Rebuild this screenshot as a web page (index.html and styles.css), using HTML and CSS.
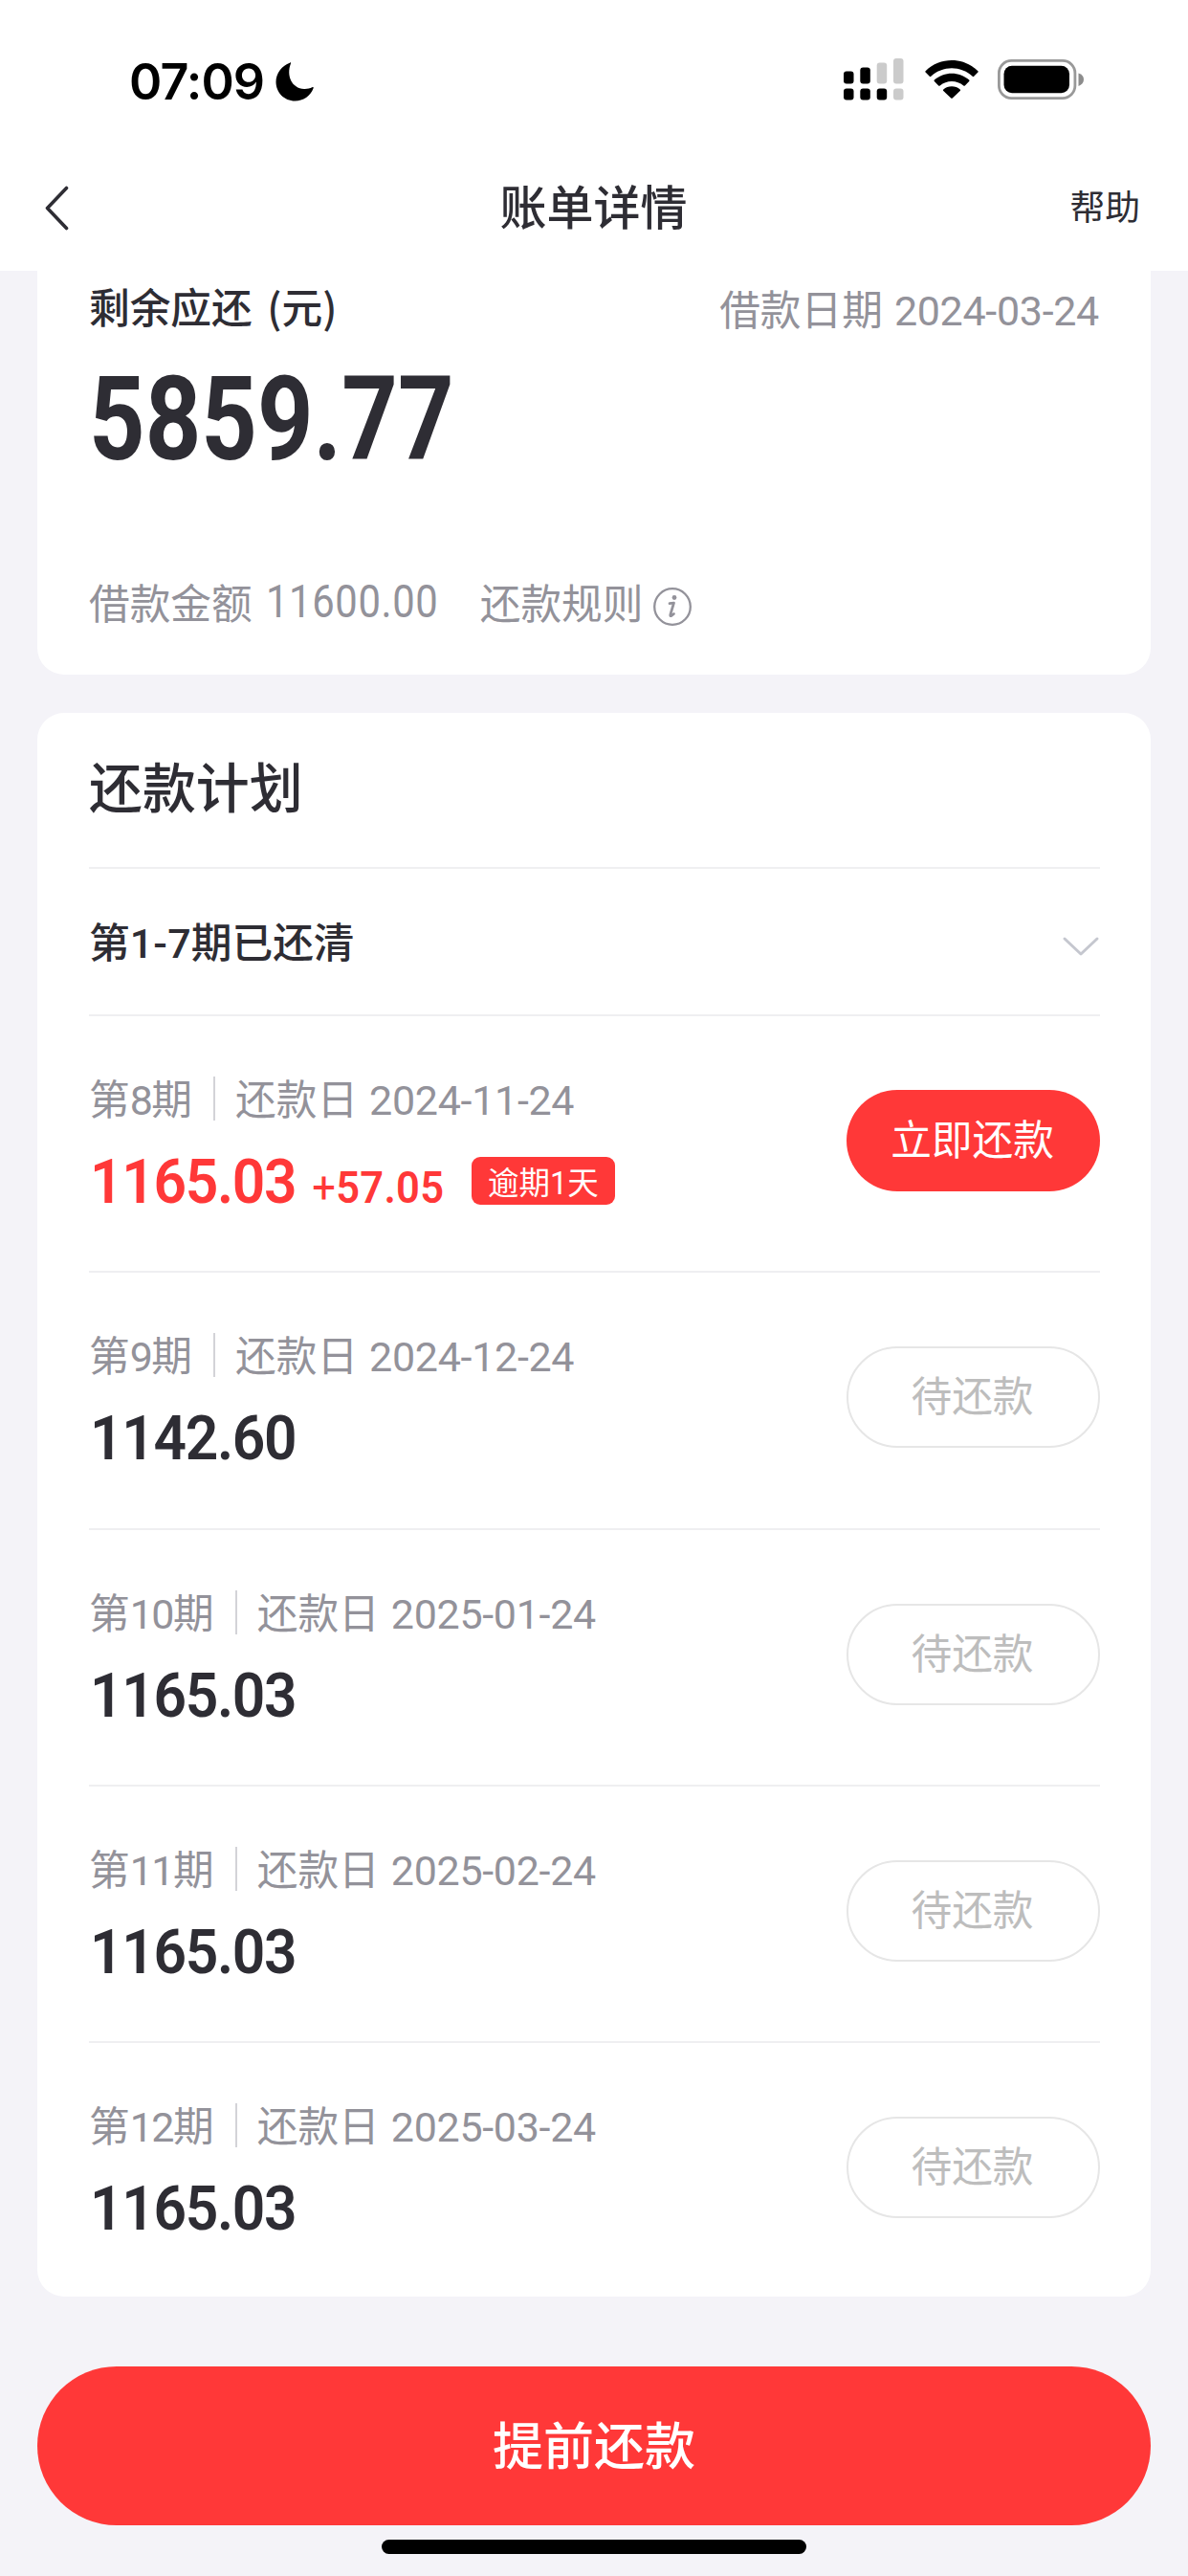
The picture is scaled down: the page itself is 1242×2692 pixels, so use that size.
FILE: index.html
```html
<!DOCTYPE html>
<html lang="zh-CN">
<head>
    <meta charset="UTF-8">
    <meta name="viewport" content="width=device-width, initial-scale=1.0">
    <title>账单详情</title>
    <link rel="stylesheet" href="styles.css">
</head>
<body>
    <header class="header">
        <div class="status-bar">
            <div class="status-left">
                <span class="time">07:09</span>
                <svg class="moon" viewBox="0 0 40 41">
                    <path d="M15 .7C15.500 0 16.300 .5 16 1.300C11 14 17 27.500 30 28C33 28.100 36 27.600 38.300 26.300C39.300 25.800 40 26.300 39.600 27.300C36.500 35.500 29 40.500 20.500 40.500C9 40.500 .5 31.500 .5 20.500C.5 11.500 7 3.500 15 .7Z" fill="#000"/>
                </svg>
            </div>
            <div class="status-right">
                <svg class="signal" viewBox="0 0 63 44">
                    <g fill="#000">
                        <rect x="0" y="13.500" width="10.500" height="13" rx="3"/>
                        <rect x="17.300" y="9.500" width="10.500" height="17" rx="3"/>
                        <rect x="0" y="31.500" width="10.500" height="12" rx="3"/>
                        <rect x="17.300" y="31.500" width="10.500" height="12" rx="3"/>
                        <rect x="34.700" y="31.500" width="10.500" height="12" rx="3"/>
                    </g>
                    <g fill="#cbcbcb">
                        <rect x="34.700" y="4.500" width="10.500" height="22" rx="3"/>
                        <rect x="52" y="0" width="10.500" height="26.500" rx="3"/>
                        <rect x="52" y="31.500" width="10.500" height="12" rx="3"/>
                    </g>
                </svg>
                <svg class="wifi" viewBox="0 0 56 40">
                    <path d="M.6 11.200C16 -3.700 40 -3.700 55.400 11.200Q56 11.900 55.400 12.600L51.200 16.800Q50.500 17.500 49.700 16.800C37.500 5.400 18.500 5.400 6.300 16.800Q5.500 17.500 4.800 16.800L.6 12.600Q0 11.900 .6 11.200Z"/>
                    <path d="M9.800 20.600C20 11.300 36 11.300 46.200 20.600Q46.900 21.300 46.200 22L41.800 26.500Q41.100 27.200 40.300 26.500C33.500 20.500 22.500 20.500 15.700 26.500Q14.900 27.200 14.200 26.500L9.800 22Q9.100 21.300 9.800 20.600Z"/>
                    <path d="M19.300 30.400C24 26.200 32 26.200 36.700 30.400Q37.400 31.100 36.700 31.900L28.800 39.500Q28 40.200 27.200 39.500L19.300 31.900Q18.600 31.100 19.300 30.400Z"/>
                </svg>
                <svg class="battery" viewBox="0 0 91 42">
                    <rect x="1.400" y="1.400" width="79.500" height="39.200" rx="13" fill="none" stroke="#999" stroke-width="2.800"/>
                    <rect x="6.500" y="6.700" width="68.500" height="28.600" rx="8.500" fill="#000"/>
                    <path d="M84.500 14.500C88 15.600 90 18 90 21C90 24 88 26.700 84.500 28Z" fill="#8c8c8c"/>
                </svg>
            </div>
        </div>
        <nav class="nav">
            <svg class="back" viewBox="0 0 28 48">
                <path d="M24.500 3.500L4.500 24.500L24.500 45.500" fill="none" stroke="#2e2d34" stroke-width="3.600" stroke-linecap="round" stroke-linejoin="round"/>
            </svg>
            <h1 class="title">账单详情</h1>
            <span class="help">帮助</span>
        </nav>
    </header>

    <main>
        <section class="card summary">
            <div class="summary-top">
                <span class="label remain">剩余应还 (元)</span>
                <span class="muted loan-date">借款日期<span class="num date">2024-03-24</span></span>
            </div>
            <div class="total"><span class="total-num">5859.77</span></div>
            <div class="summary-bottom muted">
                <span>借款金额</span>
                <span class="loan-num">11600.00</span>
                <span>还款规则</span>
                <svg class="info" viewBox="0 0 40 40">
                    <circle cx="20" cy="20" r="18.800" fill="none" stroke="#93929a" stroke-width="2.300"/>
                    <circle cx="22" cy="10.500" r="2.400" fill="#93929a"/>
                    <path d="M17 16.700L21.500 16L17.800 28.500Q17.500 30.200 19 29.500L21.500 27.500" fill="none" stroke="#93929a" stroke-width="2.700" stroke-linecap="round" stroke-linejoin="round"/>
                </svg>
            </div>
        </section>

        <section class="card plan">
            <h2 class="plan-title">还款计划</h2>
            <div class="cleared">
                <span class="label">第<span class="num range">1-7</span>期已还清</span>
                <svg class="chevron" viewBox="0 0 40 24">
                    <path d="M3 3L20 19L37 3" fill="none" stroke="#c5c7cf" stroke-width="3" stroke-linecap="round" stroke-linejoin="round"/>
                </svg>
            </div>

            <div class="row">
                <div class="row-info">
                    <div class="period muted"><span>第<span class="num">8</span>期</span><i class="sep"></i><span>还款日<span class="num date">2024-11-24</span></span></div>
                    <div class="amount overdue"><span class="amount-num">1165.03<span class="fee"><span class="plus">+</span>57.05</span></span><span class="badge">逾期<span class="badge-num">1</span>天</span></div>
                </div>
                <button class="btn btn-pay">立即还款</button>
            </div>
            <div class="row">
                <div class="row-info">
                    <div class="period muted"><span>第<span class="num">9</span>期</span><i class="sep"></i><span>还款日<span class="num date">2024-12-24</span></span></div>
                    <div class="amount"><span class="amount-num">1142.60</span></div>
                </div>
                <button class="btn">待还款</button>
            </div>
            <div class="row">
                <div class="row-info">
                    <div class="period muted"><span>第<span class="num">10</span>期</span><i class="sep"></i><span>还款日<span class="num date">2025-01-24</span></span></div>
                    <div class="amount"><span class="amount-num">1165.03</span></div>
                </div>
                <button class="btn">待还款</button>
            </div>
            <div class="row">
                <div class="row-info">
                    <div class="period muted"><span>第<span class="num">11</span>期</span><i class="sep"></i><span>还款日<span class="num date">2025-02-24</span></span></div>
                    <div class="amount"><span class="amount-num">1165.03</span></div>
                </div>
                <button class="btn">待还款</button>
            </div>
            <div class="row">
                <div class="row-info">
                    <div class="period muted"><span>第<span class="num">12</span>期</span><i class="sep"></i><span>还款日<span class="num date">2025-03-24</span></span></div>
                    <div class="amount"><span class="amount-num">1165.03</span></div>
                </div>
                <button class="btn">待还款</button>
            </div>
        </section>
    </main>

    <footer class="footer">
        <button class="btn-main">提前还款</button>
        <div class="home-bar"></div>
    </footer>
</body>
</html>
```

FILE: styles.css
```css
:root {
    --red: #ff3838;
    --text-primary: #2e2d34;
    --text-secondary: #93929a;
    --bg-color: #f4f3f8;
    --line: #efeff1;
    --cjk: 'Noto Sans CJK SC', sans-serif;
    --digits: Roboto, 'Noto Sans CJK SC', sans-serif;
}

* {
    box-sizing: border-box;
}

body {
    margin: 0;
    width: 1242px;
    height: 2692px;
    overflow: hidden;
    background: var(--bg-color);
    color: var(--text-primary);
    font-family: var(--cjk);
    font-size: 42.700px;
    line-height: 60px;
    white-space: nowrap;
}

svg {
    display: block;
    flex: none;
}

h1, h2 {
    margin: 0;
    font-weight: 500;
}

button {
    font-family: inherit;
    padding: 0;
}

/* Header */
.header {
    height: 283px;
    background: #fff;
}

.status-bar {
    height: 150px;
    padding: 61px 108px 0 135px;
    display: flex;
    justify-content: space-between;
}

.status-left,
.status-right {
    display: flex;
    align-items: flex-start;
}

.time {
    font-family: Inter, sans-serif;
    font-weight: 600;
    font-size: 52px;
    line-height: 49px;
    letter-spacing: -.9px;
    color: #000;
    width: 153px;
}

.moon {
    width: 40px;
    height: 41px;
    margin-top: 4px;
}

.signal {
    width: 63px;
    height: 44px;
    margin-right: 22px;
}

.wifi {
    width: 56px;
    height: 40px;
    margin: 2px 20px 0 0;
}

.battery {
    width: 91px;
    height: 42px;
    margin-top: 1px;
}

.nav {
    height: 133px;
    padding: 0 50px 0 45px;
    display: grid;
    grid-template-columns: 1fr auto 1fr;
    align-items: center;
}

.back {
    width: 28px;
    height: 48px;
}

.title {
    font-size: 49px;
    margin-left: 4px;
    padding-bottom: 6px;
}

.help {
    font-size: 36.800px;
    text-align: right;
    padding-bottom: 5px;
}

/* Cards */
.card {
    margin: 0 39px;
    padding: 0 53px 0 54px;
    background: #fff;
    border-radius: 28px;
}

.label {
    font-weight: 500;
}

.muted {
    color: var(--text-secondary);
    font-weight: 400;
}

.num {
    font-family: var(--digits);
    font-size: 43px;
    letter-spacing: -1.500px;
}

.range {
    letter-spacing: .2px;
}

.date {
    margin-left: 12px;
    letter-spacing: -.3px;
}

.summary {
    height: 422px;
    border-top-left-radius: 0;
    border-top-right-radius: 0;
}

.summary-top {
    height: 78px;
    display: flex;
    justify-content: space-between;
    align-items: center;
}

.remain {
    word-spacing: 6px;
    padding-bottom: 6px;
}

.loan-date {
    padding: 2px 1px 0 0;
}

.total {
    height: 152px;
    padding-top: 3px;
    display: flex;
    align-items: center;
}

.total-num {
    font-family: var(--digits);
    font-weight: 700;
    font-size: 122px;
    line-height: 150px;
    transform: scaleX(.838);
    transform-origin: left;
}

.summary-bottom {
    margin-top: 84px;
    display: flex;
    align-items: center;
}

.loan-num {
    font-family: var(--digits);
    font-size: 47.500px;
    letter-spacing: .7px;
    transform: scaleX(.88);
    transform-origin: left;
    margin: 2px 19px 0 14px;
}

.info {
    width: 40px;
    height: 40px;
    margin: 11px 0 0 10px;
}

.plan {
    margin-top: 40px;
    height: 1655px;
}

.plan-title {
    height: 161px;
    line-height: 150px;
    font-size: 55.900px;
}

.cleared {
    height: 154px;
    border-top: 2px solid var(--line);
    display: flex;
    justify-content: space-between;
    align-items: center;
}

.chevron {
    width: 40px;
    height: 24px;
    margin-top: 11px;
}

.row {
    height: 268.300px;
    border-top: 2px solid var(--line);
    display: flex;
    justify-content: space-between;
    align-items: center;
}

.row-info {
    height: 150px;
}

.period {
    height: 60px;
    margin-top: -2px;
    display: flex;
    align-items: center;
}

.sep {
    width: 2px;
    height: 46px;
    margin: 0 21px 0 22px;
    background: #d3d3d8;
}

.amount {
    display: flex;
    align-items: baseline;
    margin: 23px 0 0 1px;
    height: 70px;
    font-family: var(--digits);
    font-weight: 600;
    font-size: 64px;
    line-height: 70px;
    letter-spacing: -1.400px;
}

.amount-num {
    transform: scaleX(.945);
    transform-origin: left;
}

.overdue {
    color: var(--red);
}

.fee {
    margin-left: 18px;
    font-size: 46px;
    letter-spacing: .3px;
}

.plus {
    font-weight: 400;
}

.badge {
    align-self: center;
    width: 150px;
    height: 50px;
    margin: -5px 0 0 7px;
    border-radius: 9px;
    background: var(--red);
    color: #fff;
    font-family: var(--cjk);
    font-weight: 400;
    font-size: 32.500px;
    line-height: 49px;
    letter-spacing: 0;
    text-align: center;
}

.badge-num {
    font-family: var(--digits);
}

.btn {
    width: 265px;
    height: 106px;
    margin-bottom: 6px;
    padding: 0 2px 8px 0;
    border: 2px solid #e6e6e6;
    border-radius: 53px;
    background: #fff;
    color: #bdbdbd;
    font-size: 42.700px;
    line-height: 60px;
}

.btn-pay {
    border: none;
    background: var(--red);
    color: #fff;
}

/* Bottom action */
.footer {
    margin: 73px 39px 0;
}

.btn-main {
    display: block;
    width: 100%;
    height: 166px;
    padding-bottom: 6px;
    border: none;
    border-radius: 83px;
    background: var(--red);
    color: #fff;
    font-size: 53px;
    font-weight: 500;
}

.home-bar {
    width: 444px;
    height: 15px;
    margin: 15px auto 0;
    border-radius: 8px;
    background: #000;
}
```
